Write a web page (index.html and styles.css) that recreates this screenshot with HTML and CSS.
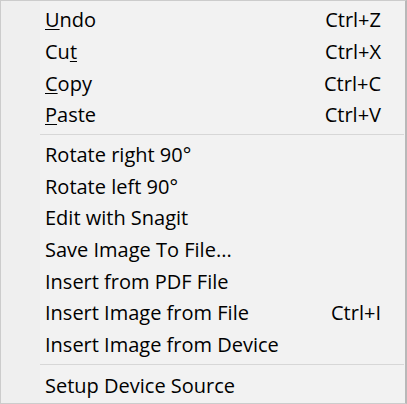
FILE: index.html
```html
<!DOCTYPE html>
<html>
<head>
<meta charset="utf-8">
<link rel="stylesheet" href="styles.css">
</head>
<body>
<div class="menu">
  <div class="item"><span class="label"><u>U</u>ndo</span><span class="key">Ctrl+Z</span></div>
  <div class="item"><span class="label">Cu<u>t</u></span><span class="key">Ctrl+X</span></div>
  <div class="item"><span class="label"><u>C</u>opy</span><span class="key">Ctrl+C</span></div>
  <div class="item"><span class="label"><u>P</u>aste</span><span class="key">Ctrl+V</span></div>
  <div class="sep"></div>
  <div class="item"><span class="label">Rotate right 90°</span></div>
  <div class="item"><span class="label">Rotate left 90°</span></div>
  <div class="item"><span class="label">Edit with Snagit</span></div>
  <div class="item"><span class="label">Save Image To File...</span></div>
  <div class="item"><span class="label">Insert from PDF File</span></div>
  <div class="item"><span class="label">Insert Image from File</span><span class="key">Ctrl+I</span></div>
  <div class="item"><span class="label">Insert Image from Device</span></div>
  <div class="sep sep2"></div>
  <div class="item"><span class="label">Setup Device Source</span></div>
</div>
</body>
</html>
```
FILE: styles.css
```css
html, body {
  margin: 0;
  padding: 0;
  background: #f2f2f2;
}
.menu {
  box-sizing: border-box;
  width: 407px;
  height: 404px;
  border-top: 1px solid #cccccc;
  border-left: 1px solid #cccccc;
  border-bottom: 1px solid #cccccc;
  border-right: 2px solid #b8b8b8;
  background: linear-gradient(to right, #efefef 0, #efefef 39px, #f2f2f2 39px);
  padding-top: 3px;
  font-family: "Open Sans", "Noto Sans", sans-serif;
  font-size: 20px;
  color: #000;
}
.item {
  display: flex;
  align-items: center;
  justify-content: space-between;
  height: 31.67px;
  padding-left: 44px;
  padding-right: 24px;
  white-space: nowrap;
}
.item u {
  text-decoration-thickness: 1px;
  text-underline-offset: 2px;
}
.sep {
  height: 1px;
  background: #d7d7d7;
  margin: 3px 1px 4px 39px;
}
.sep2 {
  margin-top: 4px;
  margin-bottom: 4px;
}
```
